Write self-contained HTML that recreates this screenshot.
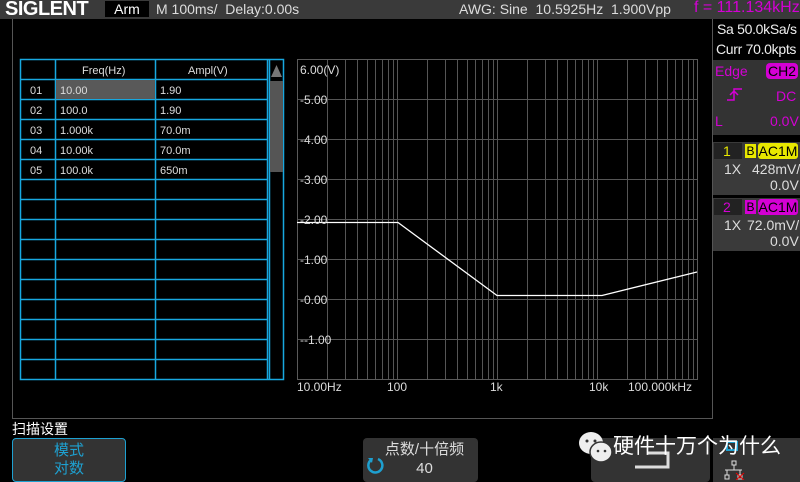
<!DOCTYPE html>
<html><head><meta charset="utf-8"><style>
*{margin:0;padding:0;box-sizing:border-box}
body{width:800px;height:480px;background:#000;position:relative;overflow:hidden;font-family:"Liberation Sans","Noto Sans CJK SC",sans-serif;color:#fff}
.a{position:absolute;white-space:nowrap}
</style></head><body>
<div class="a" style="left:0;top:0;width:800px;height:19px;background:#3a3a3a"></div>
<div class="a" style="left:5px;top:-2px;font-size:20px;font-weight:bold;letter-spacing:-0.5px;color:#fff">SIGLENT</div>
<div class="a" style="left:105px;top:1px;width:44px;height:16px;background:#000;color:#fff;font-size:14px;line-height:16px;text-align:center">Arm</div>
<div class="a" style="left:156px;top:1px;font-size:14px;color:#ddd">M 100ms/&nbsp; Delay:0.00s</div>
<div class="a" style="left:459px;top:1px;font-size:14px;color:#ddd">AWG: Sine&nbsp; 10.5925Hz&nbsp; 1.900Vpp</div>
<div class="a" style="left:694px;top:-1px;font-size:16px;color:#d400d4">f = 111.134kHz</div>
<div class="a" style="left:12px;top:19px;width:1px;height:400px;background:#555"></div>
<div class="a" style="left:12px;top:418px;width:701px;height:1px;background:#555"></div>
<div class="a" style="left:712px;top:19px;width:1px;height:400px;background:#555"></div>
<div class="a" style="left:717px;top:21px;font-size:14px;color:#eee;letter-spacing:-0.3px">Sa 50.0kSa/s</div>
<div class="a" style="left:716px;top:41px;font-size:14px;color:#eee;letter-spacing:-0.3px">Curr 70.0kpts</div>
<div class="a" style="left:713px;top:60px;width:87px;height:75px;background:#333"></div>
<div class="a" style="left:715px;top:63px;font-size:14px;color:#d400d4">Edge</div>
<div class="a" style="left:766px;top:63px;width:32px;height:16px;background:#d400d4;border-radius:4px;color:#000;font-size:14px;line-height:16px;text-align:center">CH2</div>
<svg class="a" style="left:725px;top:86px" width="20" height="16"><path d="M2 14H9V3H17M5 9L9 5L13 9" stroke="#d400d4" stroke-width="1.5" fill="none"/></svg>
<div class="a" style="left:776px;top:88px;font-size:14px;color:#d400d4">DC</div>
<div class="a" style="left:715px;top:113px;font-size:14px;color:#d400d4">L</div>
<div class="a" style="left:770px;top:113px;font-size:14px;color:#d400d4">0.0V</div>
<div class="a" style="left:713px;top:142px;width:87px;height:53px;background:#3a3a3a"></div>
<div class="a" style="left:714px;top:143px;width:28px;height:16px;background:#222"></div>
<div class="a" style="left:723px;top:143px;font-size:14px;color:#e8e800">1</div>
<div class="a" style="left:745px;top:144px;width:11px;height:14px;background:#e8e800;color:#000;font-size:12px;line-height:14px;text-align:center">B</div>
<div class="a" style="left:758px;top:143px;width:40px;height:16px;background:#e8e800;border-radius:3px;color:#000;font-size:14px;line-height:16px;text-align:center">AC1M</div>
<div class="a" style="left:724px;top:161px;font-size:14px;color:#ddd">1X</div>
<div class="a" style="left:752px;top:161px;font-size:14px;color:#ddd">428mV/</div>
<div class="a" style="left:770px;top:177px;font-size:14px;color:#ddd">0.0V</div>
<div class="a" style="left:713px;top:198px;width:87px;height:53px;background:#3a3a3a"></div>
<div class="a" style="left:714px;top:199px;width:28px;height:16px;background:#222"></div>
<div class="a" style="left:723px;top:199px;font-size:14px;color:#d400d4">2</div>
<div class="a" style="left:745px;top:200px;width:11px;height:14px;background:#d400d4;color:#000;font-size:12px;line-height:14px;text-align:center">B</div>
<div class="a" style="left:758px;top:199px;width:40px;height:16px;background:#d400d4;border-radius:3px;color:#000;font-size:14px;line-height:16px;text-align:center">AC1M</div>
<div class="a" style="left:724px;top:217px;font-size:14px;color:#ddd">1X</div>
<div class="a" style="left:747px;top:217px;font-size:14px;color:#ddd">72.0mV/</div>
<div class="a" style="left:770px;top:233px;font-size:14px;color:#ddd">0.0V</div>
<svg class="a" style="left:0;top:0" width="800" height="480" font-family="Liberation Sans, sans-serif">
<g stroke="#18a8e0" stroke-width="1.5" fill="none">
<rect x="20.5" y="59.5" width="263" height="320"/>
<line x1="55.5" y1="59" x2="55.5" y2="380"/><line x1="155.5" y1="59" x2="155.5" y2="380"/>
<line x1="267.5" y1="59" x2="267.5" y2="380"/><line x1="269.5" y1="59" x2="269.5" y2="380"/>
<path d="M20 79.5H268M20 99.5H268M20 119.5H268M20 139.5H268M20 159.5H268M20 179.5H268M20 199.5H268M20 219.5H268M20 239.5H268M20 259.5H268M20 279.5H268M20 299.5H268M20 319.5H268M20 339.5H268M20 359.5H268"/>
</g>
<rect x="56" y="80" width="99" height="19" fill="#595959"/>
<rect x="270" y="81" width="13" height="91" fill="#555"/>
<path d="M271 77L276.5 65L282 77Z" fill="#777"/>
<g fill="#ddd" font-size="11">
<text x="30" y="94">01</text><text x="60" y="94">10.00</text><text x="160" y="94">1.90</text>
<text x="30" y="114">02</text><text x="60" y="114">100.0</text><text x="160" y="114">1.90</text>
<text x="30" y="134">03</text><text x="60" y="134">1.000k</text><text x="160" y="134">70.0m</text>
<text x="30" y="154">04</text><text x="60" y="154">10.00k</text><text x="160" y="154">70.0m</text>
<text x="30" y="174">05</text><text x="60" y="174">100.0k</text><text x="160" y="174">650m</text>
<text x="82" y="74">Freq(Hz)</text><text x="188" y="74">Ampl(V)</text>
</g>
<g stroke="#555" stroke-width="1">
<path d="M297 99.5H697M297 139.5H697M297 179.5H697M297 219.5H697M297 259.5H697M297 299.5H697M297 339.5H697"/>
<path d="M327.5 59V379M345.5 59V379M357.5 59V379M367.5 59V379M375.5 59V379M382.5 59V379M388.5 59V379M393.5 59V379M397.5 59V379
M427.5 59V379M445.5 59V379M457.5 59V379M467.5 59V379M475.5 59V379M482.5 59V379M488.5 59V379M493.5 59V379M497.5 59V379
M527.5 59V379M545.5 59V379M557.5 59V379M567.5 59V379M575.5 59V379M582.5 59V379M588.5 59V379M593.5 59V379M597.5 59V379
M627.5 59V379M645.5 59V379M657.5 59V379M667.5 59V379M675.5 59V379M682.5 59V379M688.5 59V379M693.5 59V379"/>
<rect x="297.5" y="59.5" width="400" height="320" fill="none" stroke="#5a5a5a"/>
</g>
<path d="M297 222.5H398L497 295.5H602L697 272" stroke="#fff" stroke-width="1.3" fill="none"/>
<g fill="#ddd" font-size="12">
<text x="300" y="74">6.00(V)</text>
<text x="300" y="104">-5.00</text><text x="300" y="144">-4.00</text><text x="300" y="184">-3.00</text>
<text x="300" y="224">-2.00</text><text x="300" y="264">-1.00</text><text x="300" y="304">-0.00</text><text x="300" y="344">--1.00</text>
<text x="297" y="391">10.00Hz</text><text x="387" y="391">100</text><text x="490" y="391">1k</text><text x="589" y="391">10k</text><text x="628" y="391">100.000kHz</text>
</g>
</svg>
<div class="a" style="left:12px;top:419px;font-size:14px;color:#fff">扫描设置</div>
<div class="a" style="left:12px;top:438px;width:114px;height:44px;background:#333;border:1px solid #1ea0d0;border-radius:4px;color:#1ea0d0;font-size:15px;line-height:18px;text-align:center;padding-top:3px">模式<br>对数</div>
<div class="a" style="left:363px;top:438px;width:115px;height:44px;background:#333;border-radius:4px;color:#ddd;font-size:15px;line-height:19px;text-align:center;padding-top:2px;padding-left:8px">点数/十倍频<br>40</div>
<svg class="a" style="left:366px;top:456px" width="18" height="18"><path d="M5 4A7 7 0 1 0 12 3" stroke="#1ea0d0" stroke-width="2.5" fill="none"/><path d="M2 2L7 2L6 7Z" fill="#1ea0d0"/></svg>
<div class="a" style="left:591px;top:438px;width:119px;height:44px;background:#333;border-radius:4px"></div>
<svg class="a" style="left:630px;top:450px" width="60" height="25"><path d="M5 17H38V3H18" stroke="#ddd" stroke-width="3" fill="none"/></svg>
<div class="a" style="left:713px;top:438px;width:87px;height:44px;background:#333"></div>
<svg class="a" style="left:720px;top:440px" width="30" height="40"><rect x="7" y="2" width="10" height="8" fill="none" stroke="#1ea0d0" stroke-width="2"/><g stroke="#ddd" fill="none"><rect x="12" y="21" width="4" height="4"/><path d="M14 25V30M5 30H22M7 30V35M20 30V35"/><rect x="5" y="35" width="4" height="4"/><rect x="18" y="35" width="4" height="4"/></g><path d="M16 33L24 40M24 33L16 40" stroke="#e00"/></svg>
<svg class="a" style="left:576px;top:430px" width="40" height="36"><ellipse cx="15" cy="13" rx="12" ry="11" fill="#eee"/><ellipse cx="25" cy="22" rx="11" ry="10" fill="#eee" stroke="#333" stroke-width="1.5"/><circle cx="11" cy="11" r="1.5" fill="#333"/><circle cx="19" cy="11" r="1.5" fill="#333"/><circle cx="22" cy="21" r="1.3" fill="#333"/><circle cx="29" cy="21" r="1.3" fill="#333"/></svg>
<div class="a" style="left:613px;top:430px;font-size:21px;color:#fff">硬件十万个为什么</div>
</body></html>
